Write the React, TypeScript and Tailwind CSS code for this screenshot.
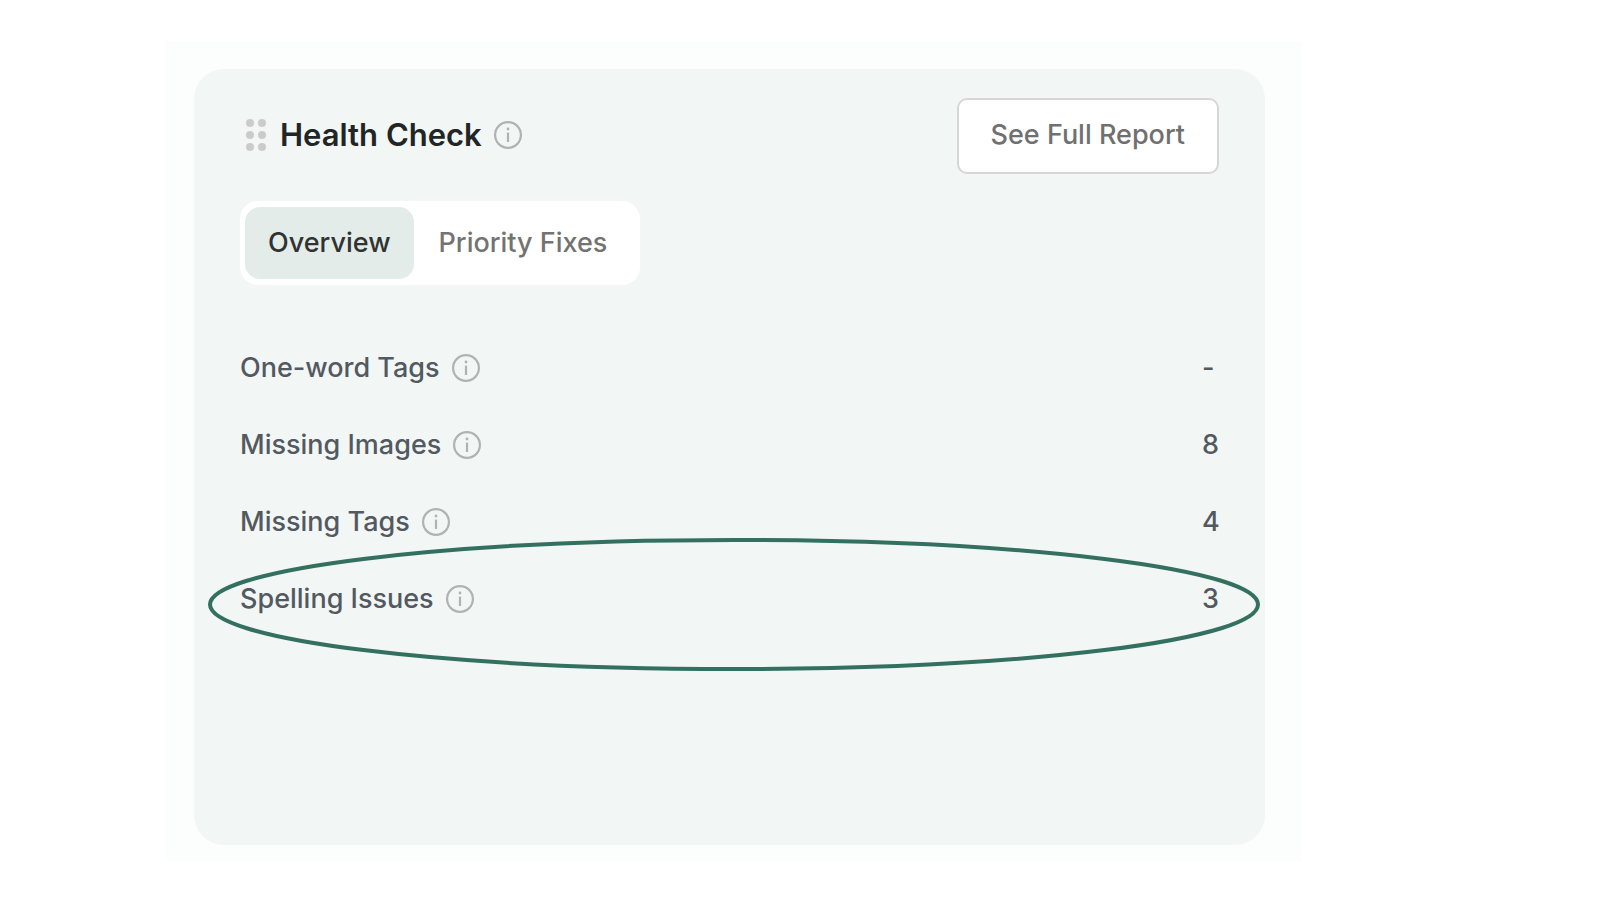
import { useState } from "react";

function InfoIcon() {
  return (
    <svg viewBox="0 0 28 28" className="size-7" fill="none" aria-hidden="true">
      <circle cx="14" cy="14" r="12.9" stroke="#b1b3b2" strokeWidth="2.2" />
      <path d="M14 11.6V21" stroke="#b1b3b2" strokeWidth="2.2" />
      <circle cx="14" cy="8" r="1.4" fill="#b1b3b2" />
    </svg>
  );
}

function InfoButton({ label }: { label: string }) {
  return (
    <button type="button" aria-label={label} className="shrink-0 rounded-full">
      <InfoIcon />
    </button>
  );
}

function DragHandle() {
  return (
    <svg viewBox="0 0 20 32" className="h-8 w-5 shrink-0" fill="#cbcbcb" aria-hidden="true">
      {[4, 16].map((x) =>
        [4, 16, 28].map((y) => <circle key={`${x}-${y}`} cx={x} cy={y} r="4" />),
      )}
    </svg>
  );
}

const tabs = ["Overview", "Priority Fixes"];

const checks = [
  { name: "One-word Tags", value: "-" },
  { name: "Missing Images", value: "8" },
  { name: "Missing Tags", value: "4" },
  { name: "Spelling Issues", value: "3", highlighted: true },
];

export default function App() {
  const [active, setActive] = useState(tabs[0]);

  return (
    <main className="min-h-screen bg-white pt-[41px] pr-[298px] pb-10 pl-[166px] font-['Inter',sans-serif] text-[27px] leading-10 font-medium">
      <div className="bg-[#fcfefd] pt-7 pr-[37px] pb-4 pl-7">
        <section className="rounded-[30px] bg-[#f2f6f5] px-[46px] pt-[29px] pb-[226px]">
          <header className="flex items-center justify-between">
            <div className="flex items-center gap-3 pb-[2px] pl-[6px]">
              <DragHandle />
              <h1 className="pl-[2px] text-[31px] font-semibold text-[#222525]">Health Check</h1>
              <InfoButton label="About Health Check" />
            </div>
            <button
              type="button"
              className="rounded-[10px] border-2 border-[#d5d7d6] bg-white px-8 pt-[15px] pb-[17px] text-[#707070]"
            >
              See Full Report
            </button>
          </header>

          <div
            role="tablist"
            className="mt-[27px] inline-flex gap-[2px] rounded-[18px] bg-white py-[6px] pr-[10px] pl-[5px]"
          >
            {tabs.map((tab) => (
              <button
                key={tab}
                type="button"
                role="tab"
                aria-selected={tab === active}
                onClick={() => setActive(tab)}
                className={
                  tab === active
                    ? "rounded-[15px] bg-[#e4ece9] px-[23px] py-4 text-[#303332]"
                    : "rounded-[15px] px-[23px] py-4 text-[#737373]"
                }
              >
                {tab}
              </button>
            ))}
          </div>

          <dl className="mt-[63px] flex flex-col gap-[37px] text-[#525960]">
            {checks.map((check) => (
              <div key={check.name} className="relative flex items-center justify-between">
                <dt className="flex items-center gap-3">
                  {check.name}
                  <InfoButton label={`About ${check.name}`} />
                </dt>
                <dd className="w-[17px]">{check.value}</dd>
                {check.highlighted && (
                  <div className="pointer-events-none absolute -top-[39px] -right-[39px] -bottom-[50px] -left-[30px]">
                    <svg className="size-full overflow-visible" aria-hidden="true">
                      <ellipse
                        cx="50%"
                        cy="50%"
                        rx="50%"
                        ry="50%"
                        fill="none"
                        stroke="#33705f"
                        strokeWidth="4"
                      />
                    </svg>
                  </div>
                )}
              </div>
            ))}
          </dl>
        </section>
      </div>
    </main>
  );
}
